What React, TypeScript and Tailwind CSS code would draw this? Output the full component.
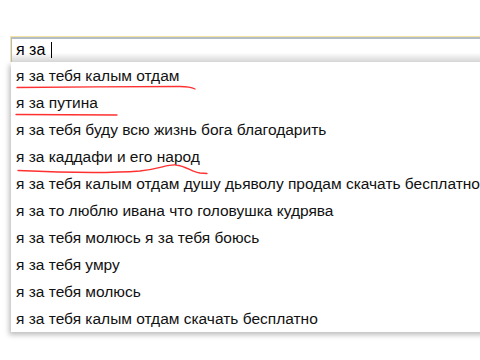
import React from "react";

const items = [
  "я за тебя калым отдам",
  "я за путина",
  "я за тебя буду всю жизнь бога благодарить",
  "я за каддафи и его народ",
  "я за тебя калым отдам душу дьяволу продам скачать бесплатно",
  "я за то люблю ивана что головушка кудрява",
  "я за тебя молюсь я за тебя боюсь",
  "я за тебя умру",
  "я за тебя молюсь",
  "я за тебя калым отдам скачать бесплатно",
];

export default function App() {
  return (
    <div
      className="relative w-[480px] h-[360px] overflow-hidden bg-white pt-[36px] pl-[10px]"
      style={{ fontFamily: '"Liberation Sans", Arial, sans-serif' }}
    >
      <div className="w-[480px] border-t border-l border-[#f5e3a0]">
        <div className="relative h-[25px] border-t-2 border-l border-[#b4bcc6] bg-gradient-to-b from-white from-60% to-[#d6d6d6]">
          <div className="flex items-center h-[22px] pl-[4px] text-[16px] text-black leading-none">
            <span>я за</span>
            <span className="ml-[6px] w-px h-[16px] bg-black" />
          </div>
        </div>
      </div>
      <div className="ml-[1px] w-[490px] bg-white shadow-[-2px_3px_5px_rgba(0,0,0,0.25)]">
        {items.map((t) => (
          <div
            key={t}
            className="h-[27px] flex items-center pl-[5px] text-[15.5px] text-[#111] whitespace-nowrap"
          >
            {t}
          </div>
        ))}
      </div>
      <svg
        className="absolute left-0 top-0 pointer-events-none"
        width="480"
        height="360"
        viewBox="0 0 480 360"
        fill="none"
      >
        <path
          d="M17 87.5 C 60 87, 140 86.5, 180 86.5 C 188 86.5, 192 87.5, 195 89"
          stroke="#ff3030"
          strokeWidth="1.3"
          strokeLinecap="round"
        />
        <path
          d="M16 114.5 L 117 115"
          stroke="#ff3030"
          strokeWidth="1.3"
          strokeLinecap="round"
        />
        <path
          d="M18 170.5 C 50 172, 100 174, 140 171 C 160 169, 168 164, 176 165 C 186 166, 192 172, 200 173 L 207 173.5"
          stroke="#ff3030"
          strokeWidth="1.3"
          strokeLinecap="round"
        />
      </svg>
    </div>
  );
}
